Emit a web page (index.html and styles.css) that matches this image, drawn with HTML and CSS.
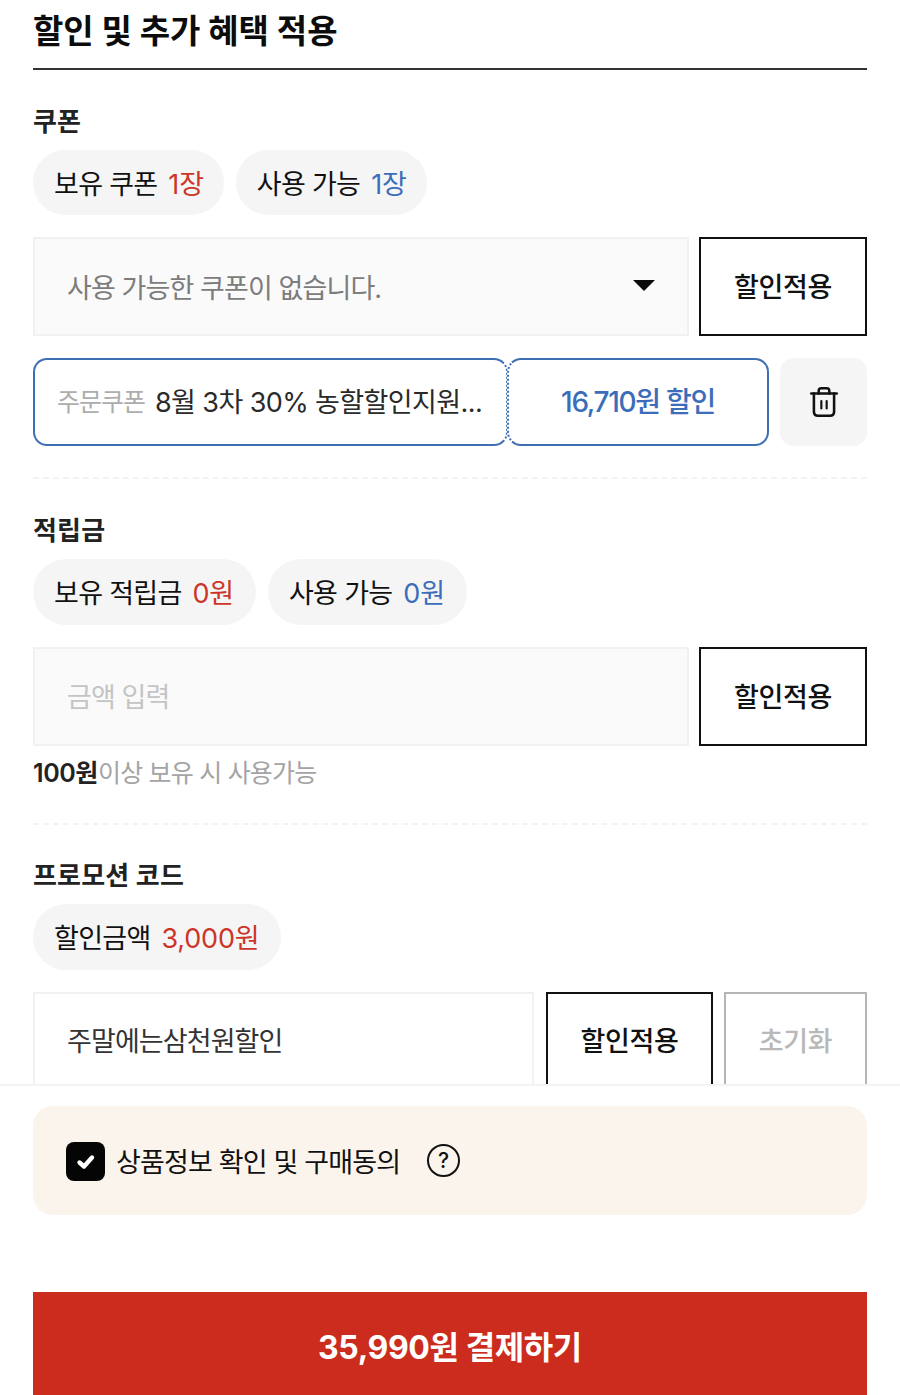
FILE: index.html
```html
<!DOCTYPE html>
<html lang="ko">
<head>
<meta charset="utf-8">
<title>할인 및 추가 혜택 적용</title>
<link rel="stylesheet" href="styles.css">
</head>
<body>
<div class="page">
  <main class="content">
    <h1 class="title">할인 및 추가 혜택 적용</h1>

    <section class="section section-coupon">
      <h2 class="label">쿠폰</h2>
      <div class="pills">
        <div class="pill">보유 쿠폰 <b class="red">1장</b></div>
        <div class="pill">사용 가능 <b class="blue">1장</b></div>
      </div>
      <div class="row">
        <div class="field select"><span class="muted">사용 가능한 쿠폰이 없습니다.</span><i class="caret"></i></div>
        <button class="btn">할인적용</button>
      </div>
      <div class="applied">
        <div class="ticket ticket-name"><span class="tag">주문쿠폰</span><span class="name">8월 3차 30% 농할할인지원...</span></div>
        <div class="ticket ticket-amount">16,710원 할인</div>
        <button class="trash" aria-label="삭제">
          <svg width="32" height="34" viewBox="0 0 30 32" fill="none" stroke="#111" stroke-width="2.4" stroke-linecap="round" stroke-linejoin="round">
            <path d="M3 8h24"/>
            <path d="M10 8V5.500C10 4 11 3 12.500 3h5C19 3 20 4 20 5.500V8"/>
            <path d="M5.500 8v17.500c0 2 1.500 3.500 3.500 3.500h12c2 0 3.500-1.500 3.500-3.500V8"/>
            <path d="M12.500 15v7M17.500 15v7" stroke-width="2"/>
          </svg>
        </button>
      </div>
    </section>

    <section class="section section-points">
      <h2 class="label">적립금</h2>
      <div class="pills">
        <div class="pill">보유 적립금 <b class="red">0원</b></div>
        <div class="pill">사용 가능 <b class="blue">0원</b></div>
      </div>
      <div class="row">
        <div class="field"><span class="placeholder">금액 입력</span></div>
        <button class="btn">할인적용</button>
      </div>
      <p class="note"><b>100원</b>이상 보유 시 사용가능</p>
    </section>

    <section class="section section-promo">
      <h2 class="label">프로모션 코드</h2>
      <div class="pills">
        <div class="pill">할인금액 <b class="red">3,000원</b></div>
      </div>
      <div class="row row-promo">
        <div class="field field-code">주말에는삼천원할인</div>
        <button class="btn btn-apply">할인적용</button>
        <button class="btn btn-reset">초기화</button>
      </div>
    </section>
  </main>

  <footer class="footer">
    <div class="agree">
      <span class="check">
        <svg width="20" height="16" viewBox="0 0 20 16" fill="none" stroke="#fff" stroke-width="4.400" stroke-linecap="round" stroke-linejoin="round"><path d="M3.500 8.500 8 12.500 16 3.500"/></svg>
      </span>
      <span class="agree-text">상품정보 확인 및 구매동의</span>
      <span class="help">?</span>
    </div>
    <button class="pay">35,990원 결제하기</button>
  </footer>
</div>
</body>
</html>
```

FILE: styles.css
```css
* { box-sizing: border-box; }
html, body { margin: 0; padding: 0; background: #fff; }
body {
  font-family: Inter, "Noto Sans CJK KR", "Noto Sans", sans-serif;
  color: #111;
}
.page { width: 900px; height: 1395px; overflow: hidden; display: flex; flex-direction: column; }
.content { height: 1084px; overflow: hidden; padding: 0 33px; flex: none; }
.title {
  margin: 0;
  height: 70px;
  padding-bottom: 11px;
  display: flex;
  align-items: center;
  font-size: 33px;
  font-weight: 700;
  border-bottom: 2px solid #333;
  color: #0c0c0c;
}
.section { border-bottom: 2px dashed #f3f3f3; }
.section-coupon { padding-top: 34px; height: 409px; }
.section-points { padding-top: 34px; height: 346px; }
.section-promo { padding-top: 33px; border-bottom: 0; }
.label {
  margin: 0;
  height: 35px;
  line-height: 36px;
  font-size: 26px;
  font-weight: 700;
  letter-spacing: 0.2px;
  color: #222;
}
.pills { display: flex; gap: 12px; margin-top: 11px; }
.pill {
  height: 66px;
  padding: 0 20px 2px 21px;
  border-radius: 33px;
  background: #f5f5f5;
  display: flex;
  align-items: center;
  gap: 4px;
  font-size: 27px;
  letter-spacing: -0.7px;
  white-space: pre;
}
.section-coupon .pill { height: 65px; padding-bottom: 1px; }
.section-points .pill { padding-right: 22px; }
.section-promo .pill { padding-right: 22px; }
.pill b { font-weight: 400; letter-spacing: -0.2px; }
.red { color: #cc3527; }
.blue { color: #3b6dbb; }
.row { display: flex; gap: 10px; margin-top: 22px; height: 99px; }
.field {
  flex: 1;
  background: #fafafa;
  border: 2px solid #f1f1f1;
  display: flex;
  align-items: center;
  padding: 0 32px 3px;
  font-size: 27px;
  letter-spacing: -0.9px;
}
.select { justify-content: space-between; padding: 0 32px 1px; }
.muted { color: #7c7c7c; }
.placeholder { color: #c4c4c4; }
.caret {
  width: 0; height: 0;
  border-left: 11px solid transparent;
  border-right: 11px solid transparent;
  border-top: 11px solid #0a0a0a;
  margin-top: -1px;
}
.btn {
  flex: none;
  width: 168px;
  background: #fff;
  border: 2px solid #111;
  font: inherit;
  font-size: 27px;
  font-weight: 500;
  color: #111;
  letter-spacing: -0.3px;
  padding: 0 0 3px;
}
.applied { display: flex; margin-top: 22px; height: 88px; }
.ticket {
  height: 88px;
  border: 2px solid #3f6fb3;
  border-radius: 14px;
  display: flex;
  align-items: center;
  background: #fff;
  padding-bottom: 4px;
}
.ticket-name { width: 475px; padding-left: 22px; gap: 10px; border-right-style: dotted; font-size: 27px; letter-spacing: -0.6px; white-space: nowrap; overflow: hidden; }
.ticket-amount { width: 262px; margin-left: -1px; justify-content: center; border-left-style: dotted; color: #3b6dbb; font-size: 28px; font-weight: 500; letter-spacing: -1.3px; }
.tag { color: #adadad; font-size: 25px; letter-spacing: -1px; }
.name { color: #2a2a2a; }
.trash {
  margin-left: 11px;
  width: 87px;
  height: 88px;
  border: 0;
  border-radius: 14px;
  background: #f5f5f5;
  display: flex;
  align-items: center;
  justify-content: center;
  padding: 0;
}
.note { margin: 11px 0 0; font-size: 25px; line-height: 32px; color: #a4a4a4; letter-spacing: -0.8px; }
.note b { color: #222; font-weight: 600; letter-spacing: -0.4px; }
.row-promo { gap: 11px; }
.field-code { flex: none; width: 501px; background: #fff; color: #333; padding-bottom: 5px; }
.btn-apply { width: 167px; margin-left: 1px; padding-bottom: 5px; }
.btn-reset { width: 143px; border-color: #b5b5b5; color: #b8b8b8; padding-bottom: 5px; }
.footer {
  flex: none;
  height: 311px;
  padding: 22px 33px 0;
  border-top: 2px solid #f4f4f4;
  background: #fff;
}
.agree {
  height: 109px;
  margin-top: -2px;
  border-radius: 20px;
  background: #fbf4ec;
  display: flex;
  align-items: center;
  padding-left: 33px;
}
.check {
  width: 39px;
  height: 39px;
  border-radius: 8px;
  background: #050505;
  display: flex;
  align-items: center;
  justify-content: center;
  margin-top: 2px;
}
.agree-text { margin-left: 11px; font-size: 27px; color: #111; letter-spacing: -0.85px; white-space: nowrap; }
.help {
  margin-left: 27px;
  width: 33px;
  height: 33px;
  border: 2px solid #111;
  border-radius: 50%;
  display: flex;
  align-items: center;
  justify-content: center;
  font-size: 21px;
  font-weight: 500;
}
.pay {
  display: block;
  width: 100%;
  height: 110px;
  margin-top: 77px;
  border: 0;
  background: #cc2c1d;
  color: #fff;
  font: inherit;
  font-size: 32px;
  font-weight: 700;
  padding: 0 0 4px;
  letter-spacing: -0.4px;
}
```
